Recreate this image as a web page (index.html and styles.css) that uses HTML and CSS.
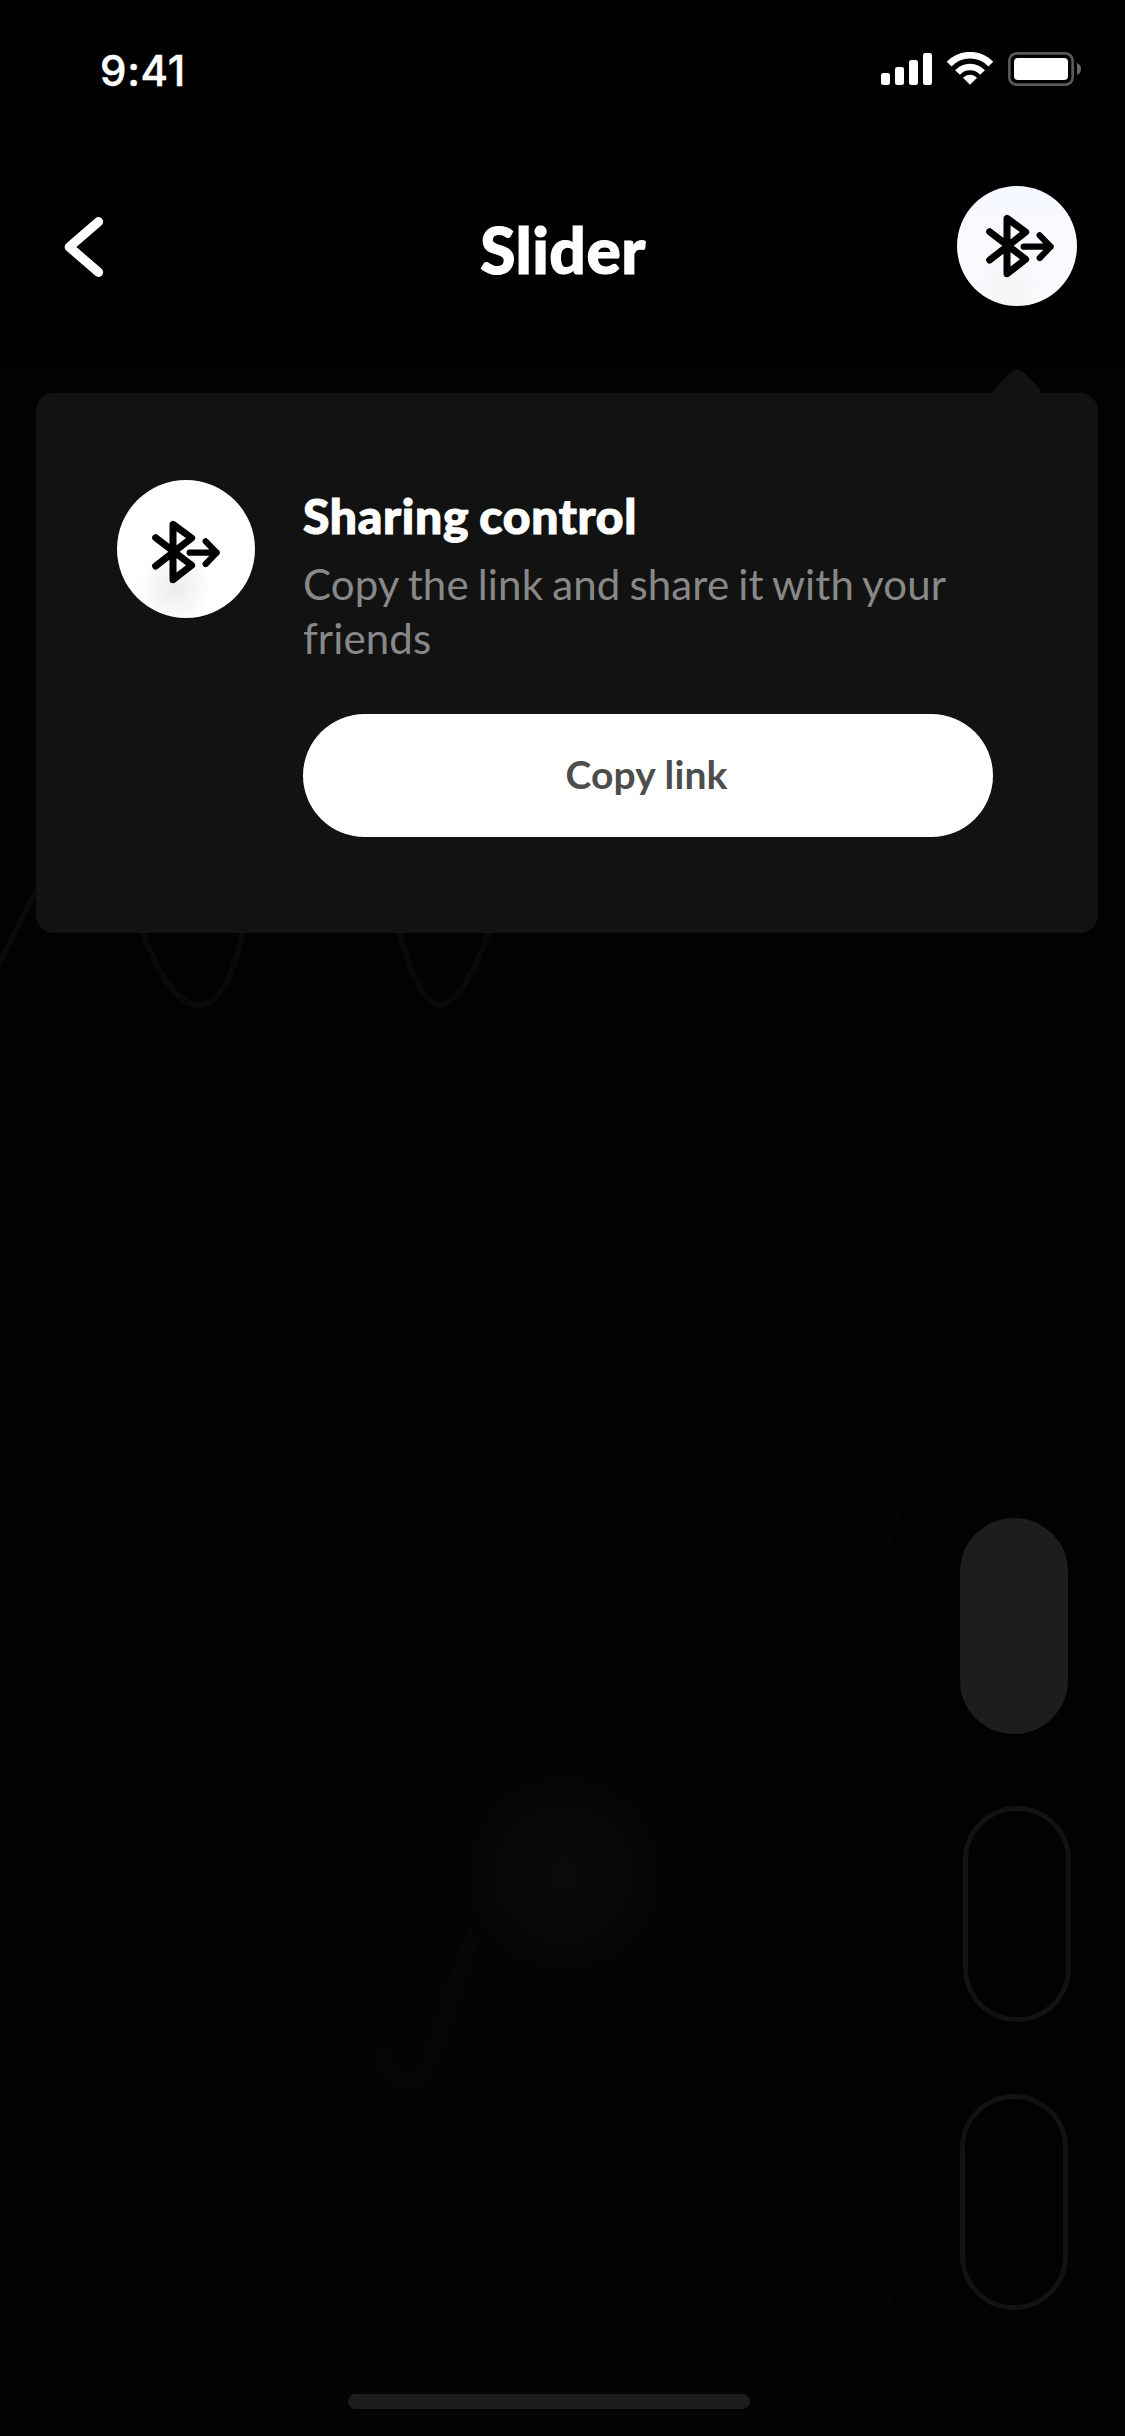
FILE: index.html
```html
<!DOCTYPE html>
<html lang="en">
<head>
<meta charset="utf-8">
<title>Slider</title>
<link rel="stylesheet" href="styles.css">
</head>
<body>
<svg class="defs" aria-hidden="true">
  <symbol id="bluetooth-share" viewBox="0 0 216 192" overflow="visible">
    <g fill="none" stroke="#000" stroke-linecap="round" stroke-linejoin="round">
      <path stroke-width="21" d="M14 138 122 54 66 13V179L122 136 14 53"/>
      <path stroke-width="18.500" d="M116 98H197M164 64 197 98 164 132"/>
    </g>
  </symbol>
</svg>
<div class="screen">
  <div class="top">
    <div class="statusbar">
      <span class="time">9:41</span>
      <div class="indicators">
        <svg class="signal" viewBox="0 0 153 96" fill="#fff">
          <rect x="0" y="60" width="27" height="36" rx="7"/>
          <rect x="42" y="42" width="27" height="54" rx="7"/>
          <rect x="84" y="21" width="27" height="75" rx="7"/>
          <rect x="126" y="0" width="27" height="96" rx="7"/>
        </svg>
        <svg class="wifi" viewBox="0 0 138 99">
          <path fill="none" stroke="#fff" stroke-width="20" d="M6.500 36.500A86 86 0 0 1 131.500 36.500M31.500 61.500A51 51 0 0 1 106.500 61.500"/>
          <path fill="#fff" stroke="#fff" stroke-width="3" stroke-linejoin="round" d="M49.500 77.500A28 28 0 0 1 88.500 77.500L69 97Z"/>
        </svg>
        <svg class="battery" viewBox="0 0 219 102">
          <rect x="4" y="4" width="190" height="94" rx="22" fill="none" stroke="#595959" stroke-width="8"/>
          <rect x="18" y="18" width="162" height="66" rx="12" fill="#fff"/>
          <path fill="#666" d="M207 33Q219 38 219 51T207 69Z"/>
        </svg>
      </div>
    </div>
    <header class="navbar">
      <svg class="back" viewBox="0 0 42 62"><path d="M34.500 5.700 5.300 31 34.500 56.300" fill="none" stroke="#fff" stroke-width="9.300" stroke-linecap="round" stroke-linejoin="round"/></svg>
      <h1 class="title">Slider</h1>
      <div class="share-button"><svg class="share-icon"><use href="#bluetooth-share"/></svg></div>
    </header>
  </div>
  <section class="popover">
    <span class="popover-tip"></span>
    <div class="badge"><svg class="share-icon"><use href="#bluetooth-share"/></svg></div>
    <div class="content">
      <h2 class="heading">Sharing control</h2>
      <p class="description">Copy the link and share it with your friends</p>
      <button class="copy">Copy link</button>
    </div>
  </section>
  <svg class="wave" viewBox="0 0 500 160"><path d="M-3 74C10 48 22 22 38 -7M137 20L143 38C155 72 175 110 199 110S235 72 243 38L247 20M396 20L400 38C408 72 424 110 439 110S474 82 488 38L493 20"/></svg>
  <main class="pad">
    <svg class="trail" viewBox="0 0 400 420">
      <defs>
        <radialGradient id="glow"><stop offset="0" stop-color="#0a0a0a"/><stop offset="1" stop-color="#040404"/></radialGradient>
      </defs>
      <path d="M42 352C54 390 80 390 93 352L130 245C140 215 170 190 220 176" fill="none" stroke="#060606" stroke-width="16"/>
      <circle cx="224" cy="174" r="108" fill="url(#glow)"/>
    </svg>
    <aside class="modes">
      <span class="pill active"></span>
      <span class="pill middle"></span>
      <span class="pill"></span>
    </aside>
  </main>
  <div class="home"></div>
</div>
</body>
</html>
```

FILE: styles.css
```css
* { box-sizing: border-box; }
body { margin: 0; background: linear-gradient(#020202 1395px, #040404 1395px); font-family: Lato, sans-serif; color: #fff; }
h1, h2, p { margin: 0; }
svg { display: block; }
.defs { position: absolute; width: 0; height: 0; }
.screen { display: flex; flex-direction: column; width: 1125px; height: 2436px; overflow: hidden; }
.top { height: 362px; background: #000; }
.statusbar { height: 140px; padding: 0 44px 0 100px; display: flex; justify-content: space-between; align-items: center; }
.time { font: 550 42px/42px Inter, sans-serif; letter-spacing: .7px; margin-top: 2px; -webkit-text-stroke: .5px #fff; }
.indicators { display: flex; align-items: flex-start; height: 36px; }
.signal { width: 51px; height: 32px; margin: 1px 15px 0 0; }
.wifi { width: 46px; height: 33px; margin-right: 15px; }
.battery { width: 73px; height: 34px; }
.navbar { display: flex; justify-content: space-between; align-items: center; height: 120px; margin-top: 46px; padding: 0 48px 0 64px; }
.back { width: 42px; height: 62px; margin-top: 2px; }
.title { font-size: 64px; line-height: 76px; font-weight: 900; letter-spacing: .5px; margin: 8px 0 0 63px; -webkit-text-stroke: 1.2px #fff; }
.share-button, .badge { display: flex; border-radius: 50%; flex: none; }
.share-button { width: 120px; height: 120px; padding: 28px 0 0 28px; background: radial-gradient(circle at 42% 88%, #f3f3f4 0, rgba(250,251,253,0) 32%), linear-gradient(#f5f8ff, #fbfcfe); }
.share-icon { width: 72px; height: 64px; overflow: visible; }
.popover { position: relative; display: flex; gap: 48px; width: 1062px; height: 540px; margin: 31px 0 0 36px; padding: 87px 105px 0 81px; background: #121212; border-radius: 18px; flex: none; z-index: 1; }
.popover-tip { position: absolute; left: 961px; top: -19px; width: 40px; height: 40px; border-radius: 9px; background: #121212; transform: rotate(45deg); }
.badge { width: 138px; height: 138px; padding: 40px 0 0 34px; background: radial-gradient(circle at 42% 78%, #ececec 0, #fff 28%); }
.content { flex: 1; }
.heading { font-size: 48px; line-height: 58px; font-weight: 900; letter-spacing: .7px; word-spacing: -2px; margin-top: 7px; -webkit-text-stroke: 1.1px #fff; }
.description { font-size: 42px; line-height: 54px; letter-spacing: .13px; word-spacing: -1.8px; color: #888; margin-top: 12px; }
.copy { display: block; width: 690px; height: 123px; margin-top: 49px; padding: 0 3px 3px 0; border: 0; border-radius: 62px; background: #fff; color: #4d4d4d; font: 700 39px/48px Lato, sans-serif; letter-spacing: .15px; }
.wave { width: 500px; height: 160px; margin-top: -38px; flex: none; overflow: visible; }
.wave path { fill: none; stroke: #090909; stroke-width: 6; }
.pad { margin-top: 340px; padding-top: 72px; height: 999px; flex: none; background: #040404; display: flex; justify-content: space-between; align-items: flex-start; }
.trail { width: 400px; height: 420px; margin: 233px 0 0 340px; }
.modes { width: 237px; height: 903px; padding: 51px 57px 0 72px; display: flex; flex-direction: column; gap: 72px; background: #020202; border-radius: 99px 0 0 99px; }
.pill { width: 108px; height: 216px; flex: none; border: 5px solid #121212; border-radius: 54px; }
.active { background: #1d1d1d; border-color: #1d1d1d; }
.middle { margin-left: 3px; }
.home { width: 402px; height: 15px; border-radius: 8px; background: #1d1d1d; margin-left: 348px; }
```
